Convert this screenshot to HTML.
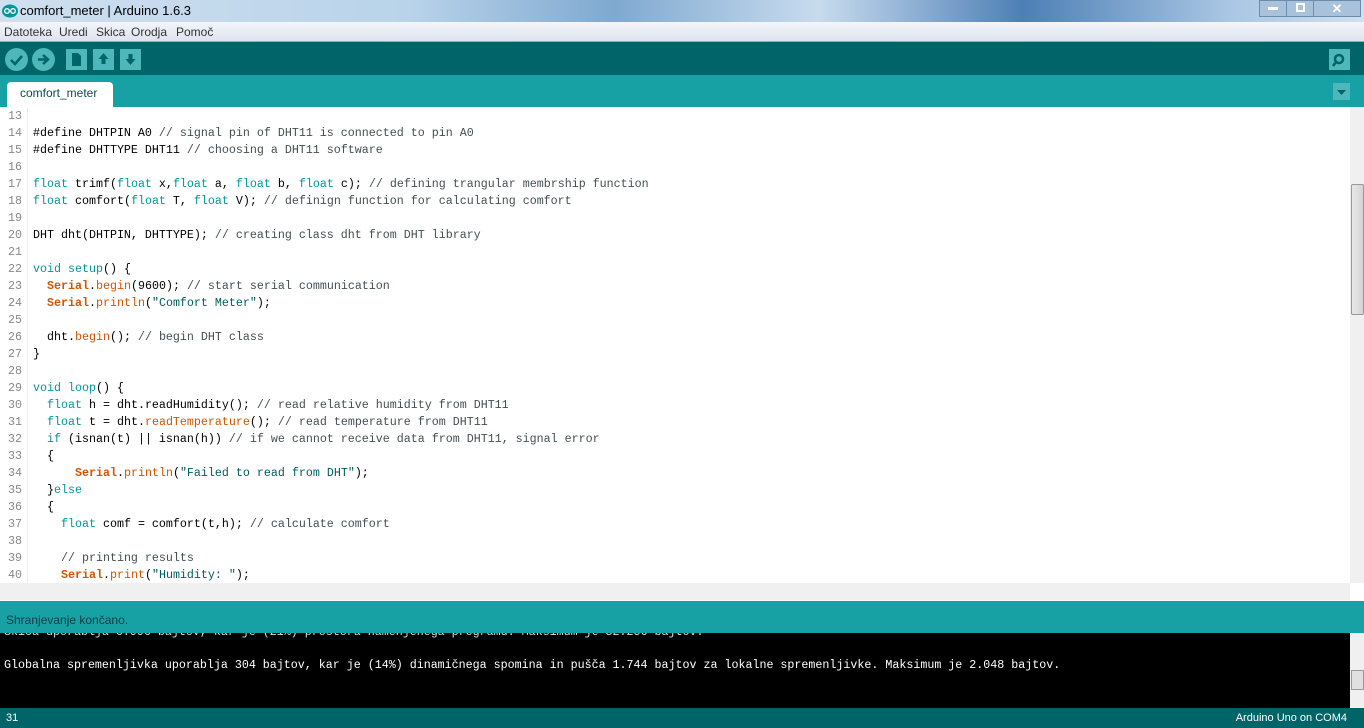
<!DOCTYPE html>
<html><head><meta charset="utf-8"><style>
*{margin:0;padding:0;box-sizing:border-box}
body{width:1364px;height:728px;overflow:hidden;position:relative;font-family:"Liberation Sans",sans-serif;background:#fff}
.abs{position:absolute}
#title{left:0;top:0;width:1364px;height:22px;background:linear-gradient(90deg,#cfe0ef 0%,#b9d3ea 30%,#7fa9d0 45%,#c8dbee 60%,#4d7fb5 75%,#a9c6e3 90%,#cfe0ef 100%)}
#title span{position:absolute;left:20px;top:3px;font-size:13px;color:#000}
#menu{left:0;top:22px;width:1364px;height:20px;background:linear-gradient(#f4f6fa,#dde3ee);border-bottom:1px solid #a0a8b4}
#menu span{position:absolute;top:3px;font-size:12px;color:#333}
#tool{left:0;top:42px;width:1364px;height:33px;background:#006468}
#tabs{left:0;top:75px;width:1364px;height:32px;background:#17a1a5}
.tb{position:absolute;width:21px;height:21px;background:#4db7bb}
.rb{position:absolute;width:23px;height:23px;border-radius:50%;background:#4db7bb;top:48px}
#tab{left:7px;top:82px;width:106px;height:25px;background:#fff;border-radius:4px 4px 0 0;font-size:12px;color:#0b4c51;padding:4px 0 0 13px}
#code{left:0;top:108px;width:1350px;height:475px;font-family:"Liberation Mono",monospace;font-size:11.67px;color:#000}
.l{height:17px;line-height:17px;white-space:pre;position:relative}
.n{position:absolute;left:0;width:22px;text-align:right;color:#888;}
.t{position:absolute;left:33px}
.k{color:#00979c}.f{color:#d35400}.s{color:#005c5f}.c{color:#434f54}.b{color:#d35400;font-weight:bold}
#gut{left:27px;top:108px;width:1px;height:475px;background:#eee}
#status{left:0;top:601px;width:1364px;height:32px;background:#17a1a5;font-size:12px;color:#0b4045}
#cons{left:0;top:633px;width:1350px;height:75px;background:#000;font-family:"Liberation Mono",monospace;font-size:11.67px;color:#fff;overflow:hidden}
#bot{left:0;top:708px;width:1364px;height:20px;background:#006468;color:#fff;font-size:11px}
</style></head><body>
<div id="title" class="abs"><svg class="abs" style="left:2px;top:4px" width="16" height="14"><ellipse cx="8" cy="7" rx="8" ry="6.5" fill="#00979c"/><circle cx="5" cy="7" r="2.3" fill="none" stroke="#fff" stroke-width="1.3"/><circle cx="11" cy="7" r="2.3" fill="none" stroke="#fff" stroke-width="1.3"/></svg><span>comfort_meter | Arduino 1.6.3</span>
<div class="abs" style="left:1259px;top:0;width:28px;height:17px;background:#a8c2dc;border:1px solid #6d8bad"></div>
<div class="abs" style="left:1286px;top:0;width:28px;height:17px;background:#a8c2dc;border:1px solid #6d8bad"></div>
<div class="abs" style="left:1313px;top:0;width:48px;height:17px;background:#a8c2dc;border:1px solid #6d8bad;color:#fff;font-size:13px;font-weight:bold;text-align:center">✕</div>
<div class="abs" style="left:1268px;top:7px;width:10px;height:3px;background:#fff"></div>
<div class="abs" style="left:1296px;top:3px;width:9px;height:9px;border:2px solid #fff"></div>
</div>
<div id="menu" class="abs"><span style="left:4px">Datoteka</span><span style="left:59px">Uredi</span><span style="left:96px">Skica</span><span style="left:131px">Orodja</span><span style="left:176px">Pomoč</span></div>
<div id="tool" class="abs"></div>
<div class="rb" style="left:5px"><svg width="23" height="23"><path d="M6 12l4 4 7-8" stroke="#006468" stroke-width="2.5" fill="none"/></svg></div>
<div class="rb" style="left:32px"><svg width="23" height="23"><path d="M6 11.5h9M11 7l5 4.5-5 4.5" stroke="#006468" stroke-width="2.5" fill="none"/></svg></div>
<div class="tb" style="left:66px;top:49px"><svg width="21" height="21"><path d="M6 4h6l3 3v10H6z" fill="#006468"/></svg></div>
<div class="tb" style="left:93px;top:49px"><svg width="21" height="21"><path d="M10.5 4l5 6h-3v5h-4v-5h-3z" fill="#006468"/></svg></div>
<div class="tb" style="left:120px;top:49px"><svg width="21" height="21"><path d="M10.5 16l5-6h-3V5h-4v5h-3z" fill="#006468"/></svg></div>
<div class="tb" style="left:1329px;top:49px"><svg width="21" height="21"><circle cx="10" cy="10" r="4" fill="none" stroke="#006468" stroke-width="2.5"/><path d="M7 13l-3 4" stroke="#006468" stroke-width="2.5"/></svg></div>
<div id="tabs" class="abs"></div>
<div id="tab" class="abs">comfort_meter</div>
<div class="abs" style="left:1333px;top:83px;width:17px;height:17px;background:#4db7bb"><svg width="17" height="17"><path d="M4 7h9l-4.5 5z" fill="#006468"/></svg></div>
<div id="gut" class="abs"></div>
<div id="code" class="abs">
<div class="l"><span class="n">13</span></div>
<div class="l"><span class="n">14</span><span class="t">#define DHTPIN A0 <span class="c">// signal pin of DHT11 is connected to pin A0</span></span></div>
<div class="l"><span class="n">15</span><span class="t">#define DHTTYPE DHT11 <span class="c">// choosing a DHT11 software</span></span></div>
<div class="l"><span class="n">16</span></div>
<div class="l"><span class="n">17</span><span class="t"><span class="k">float</span> trimf(<span class="k">float</span> x,<span class="k">float</span> a, <span class="k">float</span> b, <span class="k">float</span> c); <span class="c">// defining trangular membrship function</span></span></div>
<div class="l"><span class="n">18</span><span class="t"><span class="k">float</span> comfort(<span class="k">float</span> T, <span class="k">float</span> V); <span class="c">// definign function for calculating comfort</span></span></div>
<div class="l"><span class="n">19</span></div>
<div class="l"><span class="n">20</span><span class="t">DHT dht(DHTPIN, DHTTYPE); <span class="c">// creating class dht from DHT library</span></span></div>
<div class="l"><span class="n">21</span></div>
<div class="l"><span class="n">22</span><span class="t"><span class="k">void</span> <span class="k">setup</span>() {</span></div>
<div class="l"><span class="n">23</span><span class="t">  <span class="b">Serial</span>.<span class="f">begin</span>(9600); <span class="c">// start serial communication</span></span></div>
<div class="l"><span class="n">24</span><span class="t">  <span class="b">Serial</span>.<span class="f">println</span>(<span class="s">"Comfort Meter"</span>);</span></div>
<div class="l"><span class="n">25</span></div>
<div class="l"><span class="n">26</span><span class="t">  dht.<span class="f">begin</span>(); <span class="c">// begin DHT class</span></span></div>
<div class="l"><span class="n">27</span><span class="t">}</span></div>
<div class="l"><span class="n">28</span></div>
<div class="l"><span class="n">29</span><span class="t"><span class="k">void</span> <span class="k">loop</span>() {</span></div>
<div class="l"><span class="n">30</span><span class="t">  <span class="k">float</span> h = dht.readHumidity(); <span class="c">// read relative humidity from DHT11</span></span></div>
<div class="l"><span class="n">31</span><span class="t">  <span class="k">float</span> t = dht.<span class="f">readTemperature</span>(); <span class="c">// read temperature from DHT11</span></span></div>
<div class="l"><span class="n">32</span><span class="t">  <span class="k">if</span> (isnan(t) || isnan(h)) <span class="c">// if we cannot receive data from DHT11, signal error</span></span></div>
<div class="l"><span class="n">33</span><span class="t">  {</span></div>
<div class="l"><span class="n">34</span><span class="t">      <span class="b">Serial</span>.<span class="f">println</span>(<span class="s">"Failed to read from DHT"</span>);</span></div>
<div class="l"><span class="n">35</span><span class="t">  }<span class="k">else</span></span></div>
<div class="l"><span class="n">36</span><span class="t">  {</span></div>
<div class="l"><span class="n">37</span><span class="t">    <span class="k">float</span> comf = comfort(t,h); <span class="c">// calculate comfort</span></span></div>
<div class="l"><span class="n">38</span></div>
<div class="l"><span class="n">39</span><span class="t">    <span class="c">// printing results</span></span></div>
<div class="l"><span class="n">40</span><span class="t">    <span class="b">Serial</span>.<span class="f">print</span>(<span class="s">"Humidity: "</span>);</span></div>
</div>
<div class="abs" style="left:1350px;top:107px;width:14px;height:477px;background:#f0f0f0"></div>
<div class="abs" style="left:1351px;top:184px;width:13px;height:131px;background:linear-gradient(90deg,#e8e8e8,#d4d4d4);border:1px solid #999;border-radius:2px"></div>
<div class="abs" style="left:0;top:583px;width:1350px;height:17px;background:#f0f0f0"></div>
<div class="abs" style="left:1350px;top:583px;width:14px;height:18px;background:#fff"></div>
<div id="cons" class="abs">
<div class="abs" style="left:4px;top:-8px;white-space:pre;color:#ddd">Skica uporablja 6.996 bajtov, kar je (21%) prostora namenjenega programu. Maksimum je 32.256 bajtov.</div>
<div class="abs" style="left:4px;top:25px;white-space:pre">Globalna spremenljivka uporablja 304 bajtov, kar je (14%) dinamičnega spomina in pušča 1.744 bajtov za lokalne spremenljivke. Maksimum je 2.048 bajtov.</div>
</div>
<div id="status" class="abs"><span class="abs" style="left:6px;top:12px">Shranjevanje končano.</span></div>
<div class="abs" style="left:1350px;top:633px;width:14px;height:75px;background:#f0f0f0"></div>
<div class="abs" style="left:1351px;top:670px;width:13px;height:20px;background:#e0e0e0;border:1px solid #999"></div>
<div id="bot" class="abs"><span class="abs" style="left:6px;top:4px">31</span><span class="abs" style="right:17px;top:4px">Arduino Uno on COM4</span></div>
</body></html>
